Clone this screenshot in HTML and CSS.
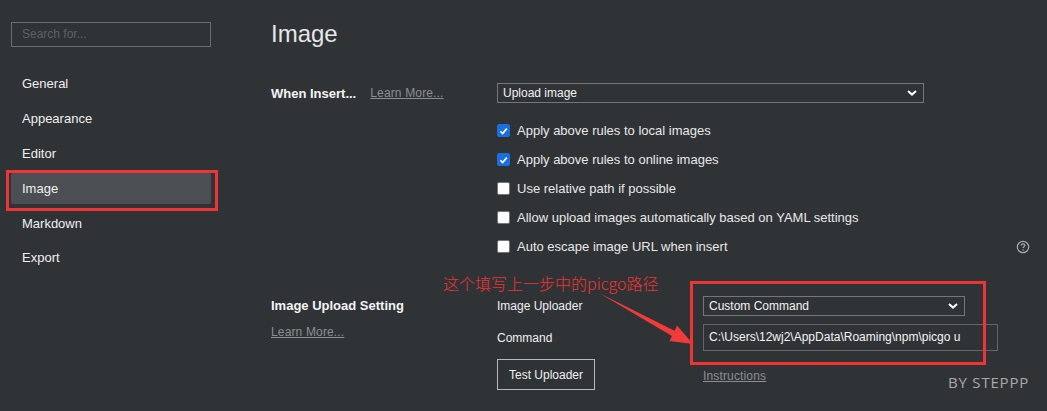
FILE: index.html
```html
<!DOCTYPE html>
<html lang="en">
<head>
<meta charset="utf-8">
<title>Image Preferences</title>
<link rel="stylesheet" href="styles.css">
</head>
<body>
<div class="app">
  <aside class="sidebar">
    <div class="search">Search for...</div>
    <nav class="nav">
      <div class="nav-item">General</div>
      <div class="nav-item">Appearance</div>
      <div class="nav-item">Editor</div>
      <div class="nav-item active">Image<span class="mark mark-nav"></span></div>
      <div class="nav-item">Markdown</div>
      <div class="nav-item">Export</div>
    </nav>
  </aside>

  <main class="main">
    <h1 class="title">Image</h1>

    <section class="setting insert">
      <div class="setting-label inline">
        <span class="label-bold">When Insert...</span>
        <a class="link">Learn More...</a>
      </div>
      <div class="setting-body">
        <div class="select select-wide">
          <span>Upload image</span>
          <svg class="chev" viewBox="0 0 10 6" width="10" height="6"><path d="M1 1 L5 4.6 L9 1" fill="none" stroke="#fff" stroke-width="2"/></svg>
        </div>
        <ul class="checks">
          <li class="check-row"><span class="box on"><svg viewBox="0 0 12 12" width="12" height="12"><path d="M2.6 6.3 L5 8.7 L9.6 3.4" fill="none" stroke="#fff" stroke-width="1.8"/></svg></span>Apply above rules to local images</li>
          <li class="check-row"><span class="box on"><svg viewBox="0 0 12 12" width="12" height="12"><path d="M2.6 6.3 L5 8.7 L9.6 3.4" fill="none" stroke="#fff" stroke-width="1.8"/></svg></span>Apply above rules to online images</li>
          <li class="check-row"><span class="box"></span>Use relative path if possible</li>
          <li class="check-row"><span class="box"></span>Allow upload images automatically based on YAML settings</li>
          <li class="check-row"><span class="box"></span>Auto escape image URL when insert
            <svg class="help" viewBox="0 0 14 14" width="14" height="14"><circle cx="7" cy="7" r="5.7" fill="none" stroke="#a9abad" stroke-width="1.2"/><path d="M5.2 5.6 C5.2 4.4 6 3.9 7 3.9 C8 3.9 8.8 4.5 8.8 5.4 C8.8 6.5 7.2 6.6 7.2 8" fill="none" stroke="#a9abad" stroke-width="1.2"/><circle cx="7.2" cy="9.9" r="0.75" fill="#a9abad"/></svg>
          </li>
        </ul>
      </div>
    </section>

    <section class="setting upload">
      <div class="setting-label stacked">
        <span class="label-bold">Image Upload Setting</span>
        <a class="link">Learn More...</a>
      </div>
      <div class="upload-grid">
        <span class="field-label">Image Uploader</span>
        <div class="select select-mid">
          <span>Custom Command</span>
          <svg class="chev" viewBox="0 0 10 6" width="10" height="6"><path d="M1 1 L5 4.6 L9 1" fill="none" stroke="#fff" stroke-width="2"/></svg>
        </div>
        <span class="field-label">Command</span>
        <div class="text-input">C:\Users\12wj2\AppData\Roaming\npm\picgo u</div>
        <div><button class="btn">Test Uploader</button></div>
        <div><a class="link">Instructions</a></div>
      </div>
    </section>
  </main>

  <div class="note">这个填写上一步中的picgo路径</div>
  <svg class="arrow" width="1047" height="411" viewBox="0 0 1047 411">
    <polygon points="599,293 674.5,330.8 677,325.5 693,344 669.5,341 672,336" fill="#f23a3a"/>
  </svg>
  <div class="mark mark-upload"></div>
  <div class="watermark">BY STEPPP</div>
</div>
</body>
</html>
```

FILE: styles.css
```css
* { box-sizing: border-box; }

html, body {
  margin: 0;
  padding: 0;
  background: #2f3336;
}

body {
  font-family: "Liberation Sans", Arial, sans-serif;
  color: #e8e8e8;
  width: 1047px;
  height: 411px;
  overflow: hidden;
}

.app {
  position: relative;
  display: flex;
  width: 1047px;
  height: 411px;
}

/* Sidebar */
.sidebar {
  width: 222px;
  flex: none;
  padding: 22px 11px 0 11px;
}

.search {
  width: 200px;
  height: 25px;
  border: 1px solid #6a6e72;
  font-size: 12px;
  line-height: 23px;
  padding-left: 10px;
  color: #5d6165;
}

.nav {
  margin-top: 21px;
  display: flex;
  flex-direction: column;
  gap: 4px;
}

.nav-item {
  position: relative;
  height: 31px;
  line-height: 31px;
  padding-left: 11px;
  font-size: 13px;
  color: #f0f0f0;
  border-radius: 2px;
}

.nav-item:nth-child(n+5) {
  margin-top: -0.5px;
}

.nav-item.active {
  background: #4b4f53;
}

.mark {
  position: absolute;
  border: 3px solid #ee3535;
  pointer-events: none;
}

.mark-nav {
  left: -5px;
  top: -3px;
  width: 212px;
  height: 41px;
}

/* Main */
.main {
  flex: 1;
  padding: 19px 0 0 49px;
}

.title {
  margin: 0;
  font-size: 24px;
  line-height: 30px;
  font-weight: normal;
  color: #e6e6e6;
}

.setting {
  display: flex;
}

.insert {
  margin-top: 34px;
}

.upload {
  margin-top: 35px;
}

.setting-label {
  width: 226px;
  flex: none;
}

.setting-label.inline {
  display: flex;
  align-items: center;
  gap: 14px;
  height: 16px;
  margin-top: 2px;
}

.setting-label.stacked {
  display: flex;
  flex-direction: column;
  align-items: flex-start;
}

.setting-label.stacked .label-bold {
  line-height: 20px;
}

.setting-label.stacked .link {
  margin-top: 8px;
  line-height: 16px;
}

.label-bold {
  font-size: 13px;
  font-weight: bold;
  color: #f4f4f4;
}

.link {
  font-size: 12px;
  letter-spacing: 0.15px;
  color: #8c8f92;
  text-decoration: underline;
}

.setting-body {
  flex: 1;
}

.select {
  display: flex;
  align-items: center;
  justify-content: space-between;
  height: 20px;
  border: 1px solid #73777b;
  padding: 0 6px 0 5px;
  font-size: 12px;
  color: #f2f2f2;
}

.select-wide { width: 427px; }
.select-mid { width: 262px; }

.chev { flex: none; }

.checks {
  list-style: none;
  margin: 13px 0 0 0;
  padding: 0;
  width: 533px;
}

.check-row {
  display: flex;
  align-items: center;
  height: 29px;
  font-size: 13px;
  color: #e8e8e8;
}

.box {
  width: 13px;
  height: 13px;
  flex: none;
  margin-right: 7px;
  background: #ffffff;
  border: 1px solid #767676;
  border-radius: 2px;
  display: flex;
  align-items: center;
  justify-content: center;
}

.box.on {
  background: #1a6fe0;
  border-color: #1a6fe0;
}

.box svg { display: block; }

.help {
  margin-left: auto;
  margin-right: 0;
}

/* Upload grid */
.upload-grid {
  display: grid;
  grid-template-columns: 206px auto;
  grid-template-rows: 20px 27px 31px;
  row-gap: 8px;
  align-items: center;
}

.field-label {
  font-size: 12px;
  color: #f0f0f0;
}

.text-input {
  width: 295px;
  height: 27px;
  border: 1px solid #62666a;
  padding-left: 5px;
  font-size: 12px;
  line-height: 25px;
  color: #f4f4f4;
}

.btn {
  display: block;
  width: 98px;
  height: 31px;
  background: transparent;
  border: 1px solid #b9b9b9;
  color: #f0f0f0;
  font-family: "Liberation Sans", Arial, sans-serif;
  font-size: 12px;
  padding: 0;
}

/* Overlays (annotations) */
.note {
  position: absolute;
  left: 443px;
  top: 272px;
  font-family: "Noto Sans CJK SC", "Liberation Sans", sans-serif;
  font-size: 16px;
  font-weight: 300;
  line-height: 22px;
  color: #f03434;
}

.arrow {
  position: absolute;
  left: 0;
  top: 0;
  pointer-events: none;
}

.mark-upload {
  left: 690px;
  top: 281px;
  width: 296px;
  height: 84px;
}

.watermark {
  position: absolute;
  left: 948px;
  top: 372px;
  font-family: "Open Sans", "DejaVu Sans", sans-serif;
  font-size: 15px;
  line-height: 20px;
  letter-spacing: 0.8px;
  color: #a7a9ab;
}
```
